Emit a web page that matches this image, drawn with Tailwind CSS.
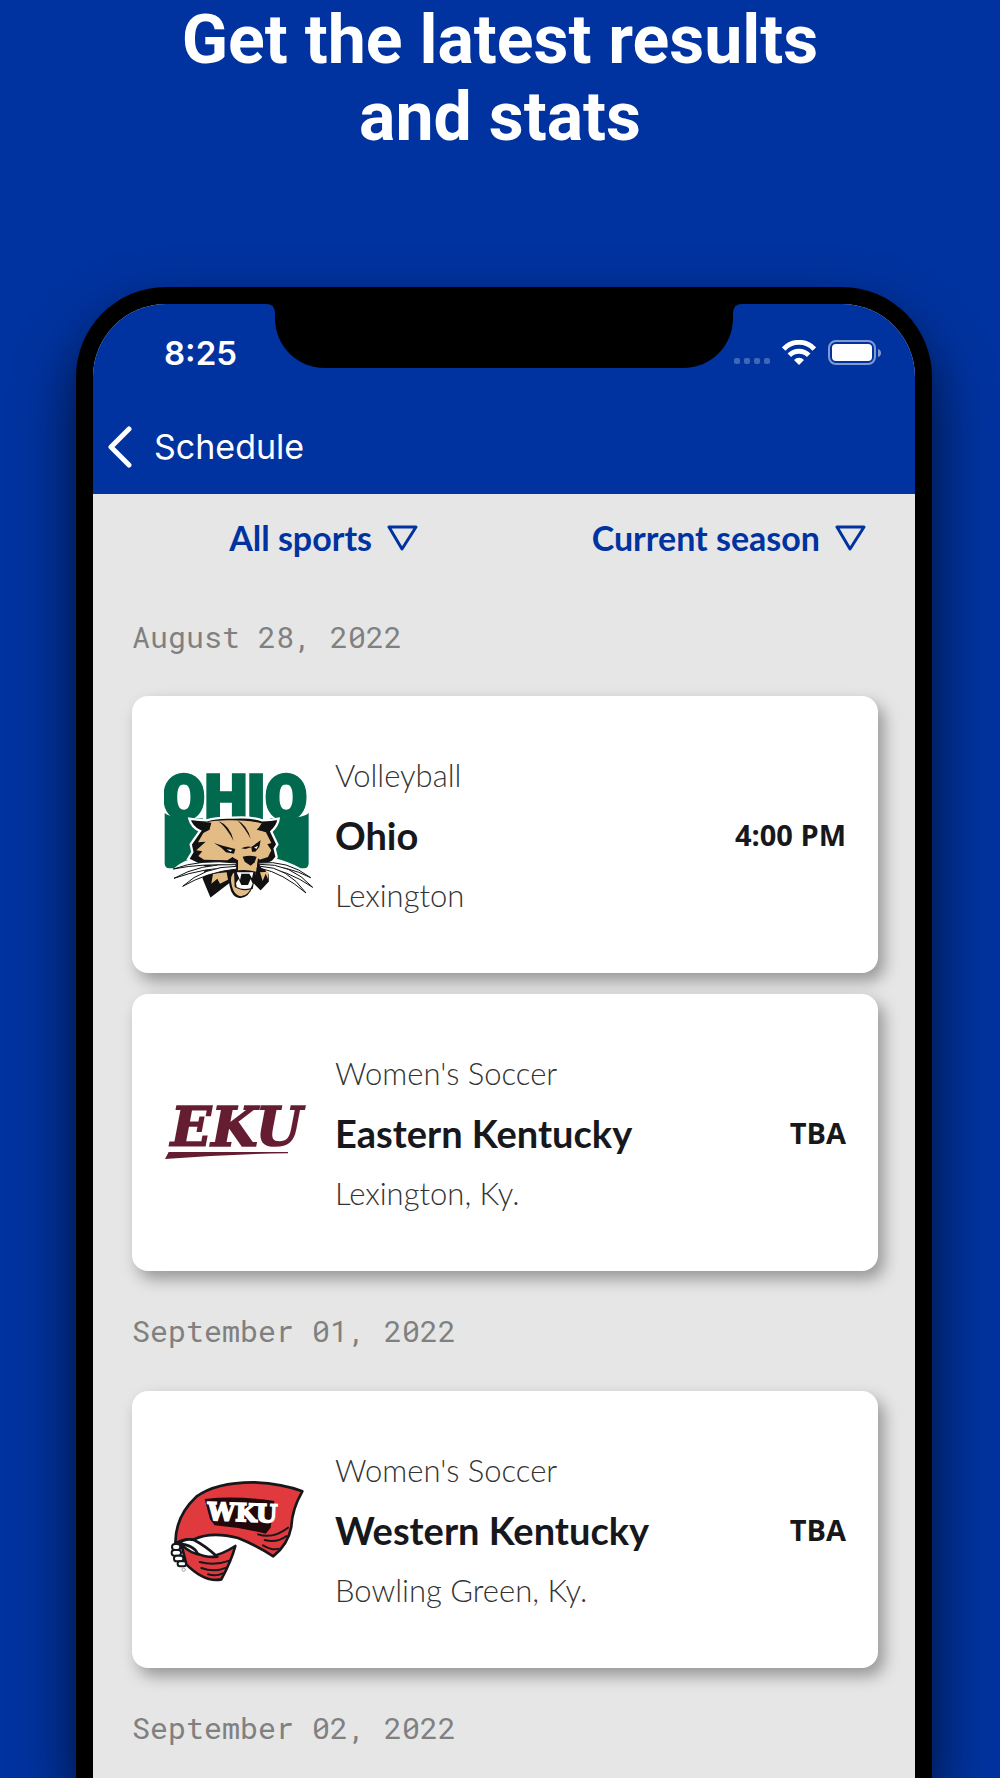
<!DOCTYPE html>
<html lang="en">
<head>
  <meta charset="UTF-8"/>
  <meta name="viewport" content="width=device-width, initial-scale=1.0"/>
  <title>Schedule</title>
  <script src="https://cdn.jsdelivr.net/npm/@tailwindcss/browser@4"></script>
</head>
<body class="bg-[#0033a0] min-h-screen flex flex-col overflow-x-hidden font-['Lato',sans-serif]">

  <!-- Headline -->
  <h1 class="h-[287px] pt-[2px] text-center text-white text-[68px] leading-[77px] font-bold font-['Roboto',sans-serif]">
    Get the latest results<br/>and stats
  </h1>

  <!-- Phone -->
  <div class="flex-1 flex flex-col ml-[76px] mr-[68px] px-[17px] pt-[17px] bg-black rounded-t-[90px] shadow-[0_30px_60px_rgba(0,0,0,0.7)]">
    <div class="flex-1 flex flex-col bg-[#e6e6e6] rounded-t-[73px] overflow-hidden">

      <!-- Status bar -->
      <header class="bg-[#0033a0] text-white font-['Inter',sans-serif]">
        <div class="relative h-[98px] flex items-center justify-between pl-[71px] pr-[33px]">
          <svg class="absolute top-0 left-1/2 -translate-x-1/2 w-[476px] h-16" viewBox="0 0 476 64" aria-hidden="true">
            <path d="M0 0H476Q467 0 467 9V14C467 42 445 64 417 64H59C31 64 9 42 9 14V9Q9 0 0 0Z"/>
          </svg>
          <span class="text-[33px] leading-10 font-semibold">8:25</span>
          <div class="flex items-center gap-3">
            <svg class="w-9 h-[26px]" viewBox="0 0 36 26" fill="#fff" fill-opacity="0.25" aria-hidden="true">
              <rect x="0" y="18" width="6" height="6" rx="2"/>
              <rect x="10" y="18" width="6" height="6" rx="2"/>
              <rect x="20" y="18" width="6" height="6" rx="2"/>
              <rect x="30" y="18" width="6" height="6" rx="2"/>
            </svg>
            <svg class="w-[34px] h-[26px]" viewBox="0 0 102 78" aria-label="Wi-Fi" role="img">
              <g fill="none" stroke="#fff" stroke-width="15">
                <path d="M5 27Q24 7 51 7T97 27"/>
                <path d="M22 46Q34 34 51 34T80 46"/>
              </g>
              <path d="M51 75 36 60Q42 53 51 53T66 60Z" fill="#fff"/>
            </svg>
            <svg class="w-[54px] h-[26px]" viewBox="0 0 54 26" aria-label="Battery" role="img">
              <rect x="1" y="1" width="46" height="23" rx="7" fill="none" stroke="#fff" stroke-opacity="0.5" stroke-width="2"/>
              <rect x="4" y="4" width="40" height="17" rx="4" fill="#fff"/>
              <path d="M50 9Q53 10 53 13T50 17Z" fill="#fff" fill-opacity="0.5"/>
            </svg>
          </div>
        </div>

        <!-- Nav bar -->
        <div class="h-[92px] flex items-center pb-[2px] pl-[15px]">
          <a href="#" class="flex items-center gap-[22px] text-[34px] leading-[46px]">
            <svg class="w-6 h-[42px]" viewBox="0 0 24 42" fill="none" stroke="#fff" stroke-width="5" stroke-linecap="round" stroke-linejoin="round" aria-hidden="true">
              <path d="M21 3 3 21 21 39"/>
            </svg>
            Schedule
          </a>
        </div>
      </header>

      <!-- Filters -->
      <form class="grid grid-cols-2 h-[83px] pt-1 text-[#0033a0] text-[34px] leading-10 font-bold">
        <div class="flex items-center justify-end gap-[15px] pr-[86px]">
          <select id="sport" aria-label="Sport" class="appearance-none field-sizing-content bg-transparent">
            <option>All sports</option>
          </select>
          <svg class="w-[31px] h-[26px]" viewBox="0 0 31 26" fill="none" stroke="#0033a0" stroke-width="3" stroke-linejoin="round" aria-hidden="true">
            <path d="M2 2H29L15 24Z"/>
          </svg>
        </div>
        <div class="flex items-center justify-end gap-[15px] pr-[49px]">
          <select id="season" aria-label="Season" class="appearance-none field-sizing-content bg-transparent">
            <option>Current season</option>
          </select>
          <svg class="w-[31px] h-[26px]" viewBox="0 0 31 26" fill="none" stroke="#0033a0" stroke-width="3" stroke-linejoin="round" aria-hidden="true">
            <path d="M2 2H29L15 24Z"/>
          </svg>
        </div>
      </form>

      <!-- Games -->
      <main class="pl-[39px] pr-[37px]">
        <h2 class="pt-10 pb-[39px] text-[#808080] text-[30px] leading-10 font-['Roboto_Mono','DejaVu_Sans_Mono',monospace]">August 28, 2022</h2>

        <div class="flex flex-col gap-[21px]">
          <article class="h-[277px] flex items-center px-8 bg-white rounded-2xl shadow-[6px_8px_16px_rgba(0,0,0,0.35)]">
            <svg class="w-[149px] h-[155px] shrink-0" viewBox="40 0 447 465" aria-label="Ohio Bobcats" role="img">
              <g fill="#00694e">
                <path d="M42 168Q60 186 157 184V300Q100 305 70 334H56Q42 334 42 318ZM359 184Q460 186 474 168V318Q474 334 460 334H450Q420 315 359 300Z"/>
                <text x="37" y="185" font-family="Roboto" font-weight="900" font-size="181" stroke="#00694e" stroke-width="10">OHIO</text>
              </g>
              <!-- head -->
              <path d="M116 185Q150 190 168 190Q200 180 245 182Q300 178 335 190Q360 190 384 185Q382 205 362 224L380 262 372 275 378 300 366 314Q330 330 358 350V375L330 405 310 385Q300 425 268 427Q240 425 233 385L178 427 152 365 160 330 112 307 125 285 120 262 148 222Q122 210 116 185Z" fill="#111" stroke="#fff" stroke-width="7"/>
              <path d="M150 199Q175 193 182 198L176 218 158 228 142 256 165 254 137 280 155 283 143 297 160 308 230 310 246 300 260 325 262 341Q240 345 241 372Q246 414 270 418Q296 416 303 385L316 345 322 310 352 300 362 280 350 262 362 258 345 224 318 218 335 200Q300 190 245 190Q200 187 150 199Z" fill="#e3bc85"/>
              <path d="M187 350 182 380 200 365 208 380 232 368 228 346ZM328 346 336 372 345 350 352 366 354 344Z" fill="#e3bc85"/>
              <g fill="#111">
                <path d="M203 192Q238 205 249 252Q228 212 203 192ZM260 190Q290 205 300 246Q282 212 260 190Z"/>
                <path d="M190 258 216 266 254 276 250 290 226 286 212 272ZM302 270 330 250 326 270 314 284 304 284Z"/>
                <path d="M272 274Q288 265 304 270L284 276Z"/>
                <path d="M276 299Q298 294 318 299L312 316 300 326 282 314Z"/>
                <path d="M250 342Q284 335 316 344L306 396Q274 405 252 390Z"/>
                <path d="M180 198 148 205 164 222 176 218ZM332 200 362 202 346 226 322 218Z"/>
                <path d="M244 300 262 310V338L238 336ZM322 304 334 314 318 338Z"/>
              </g>
              <path d="M228 277 244 279 240 284ZM310 272 322 266 318 275Z" fill="#fff"/>
              <path d="M258 346H308L304 364 296 350 272 350 268 370ZM256 378 264 366 272 384H292L300 366 306 380 300 394Q274 400 258 390Z" fill="#fff"/>
              <!-- whiskers -->
              <g fill="#fff" stroke="#111" stroke-width="3">
                <path d="M258 318Q150 305 68 336Q155 318 258 326Z"/>
                <path d="M256 323Q150 318 70 364Q160 332 256 331Z"/>
                <path d="M258 328Q160 328 96 388Q170 345 258 336Z"/>
                <path d="M324 318Q410 308 480 362Q410 325 326 325Z"/>
                <path d="M326 322Q420 318 486 391Q410 338 328 329Z"/>
                <path d="M330 328Q410 330 466 408Q396 348 330 334Z"/>
              </g>
            </svg>
            <div class="flex-1 ml-[22px] text-[#333] text-[31px] leading-[60px] font-light">
              <p>Volleyball</p>
              <h3 class="text-[#16181c] text-[38px] font-bold">Ohio</h3>
              <p>Lexington</p>
            </div>
            <time class="text-[#16181c] text-[29px] font-bold font-['Open_Sans',sans-serif]">4:00 PM</time>
          </article>

          <article class="h-[277px] flex items-center px-8 bg-white rounded-2xl shadow-[6px_8px_16px_rgba(0,0,0,0.35)]">
            <svg class="w-[149px] h-20 shrink-0" viewBox="40 3 447 240" aria-label="Eastern Kentucky Colonels" role="img">
              <g fill="#651d32">
                <text x="60" y="161" font-family="DejaVu Serif" font-weight="700" font-style="italic" font-size="160" stroke="#651d32" stroke-width="5">EKU</text>
                <path d="M54 180H412V184Q230 186 43 201Z"/>
              </g>
            </svg>
            <div class="flex-1 ml-[22px] text-[#333] text-[31px] leading-[60px] font-light">
              <p>Women's Soccer</p>
              <h3 class="text-[#16181c] text-[38px] font-bold">Eastern Kentucky</h3>
              <p>Lexington, Ky.</p>
            </div>
            <span class="text-[#16181c] text-[29px] font-bold font-['Open_Sans',sans-serif]">TBA</span>
          </article>
        </div>

        <h2 class="py-10 text-[#808080] text-[30px] leading-10 font-['Roboto_Mono','DejaVu_Sans_Mono',monospace]">September 01, 2022</h2>

        <article class="h-[277px] flex items-center px-8 bg-white rounded-2xl shadow-[6px_8px_16px_rgba(0,0,0,0.35)]">
          <svg class="w-[149px] h-[125px] shrink-0" viewBox="28 3 447 375" aria-label="Western Kentucky Hilltoppers" role="img">
            <g stroke="#15171a" stroke-width="8" stroke-linejoin="round">
              <path d="M62 232Q62 150 125 92Q185 48 300 49Q385 53 443 76Q412 130 410 182Q400 235 356 271Q310 240 250 216Q170 195 118 220Q85 218 62 232Z" fill="#e03a3e"/>
              <path d="M80 235Q115 270 150 265Q180 280 242 240Q230 285 200 340Q150 350 95 295Z" fill="#e03a3e"/>
              <path d="M72 232Q92 215 118 222Q150 238 188 272Q150 275 128 262Q118 238 72 232Z" fill="#fff"/>
              <g fill="#fff" stroke-width="6">
                <rect x="52" y="234" width="25" height="18" rx="9"/>
                <rect x="51" y="252" width="28" height="17" rx="8"/>
                <rect x="58" y="269" width="28" height="17" rx="8"/>
                <rect x="69" y="286" width="25" height="15" rx="7"/>
              </g>
            </g>
            <g fill="none" stroke="#15171a" stroke-width="6" stroke-linecap="round">
              <path d="M310 205Q355 220 400 185M330 222Q365 232 396 210M325 238Q355 255 372 248"/>
              <path d="M135 288Q180 300 225 284M140 306Q180 320 215 305M160 325Q185 332 204 322"/>
            </g>
            <path d="M150 99Q250 88 359 105L348 185 333 203Q260 185 180 178L166 160Z" fill="#23080b"/>
            <text x="158" y="162" font-family="DejaVu Serif" font-weight="700" font-size="74" fill="#fff" stroke="#fff" stroke-width="5" transform="rotate(2 158 162)">WKU</text>
            <circle cx="87" cy="311" r="5" fill="none" stroke="#777" stroke-width="2"/>
          </svg>
          <div class="flex-1 ml-[22px] text-[#333] text-[31px] leading-[60px] font-light">
            <p>Women's Soccer</p>
            <h3 class="text-[#16181c] text-[38px] font-bold">Western Kentucky</h3>
            <p>Bowling Green, Ky.</p>
          </div>
          <span class="text-[#16181c] text-[29px] font-bold font-['Open_Sans',sans-serif]">TBA</span>
        </article>

        <h2 class="pt-10 text-[#808080] text-[30px] leading-10 font-['Roboto_Mono','DejaVu_Sans_Mono',monospace]">September 02, 2022</h2>
      </main>
    </div>
  </div>

</body>
</html>
